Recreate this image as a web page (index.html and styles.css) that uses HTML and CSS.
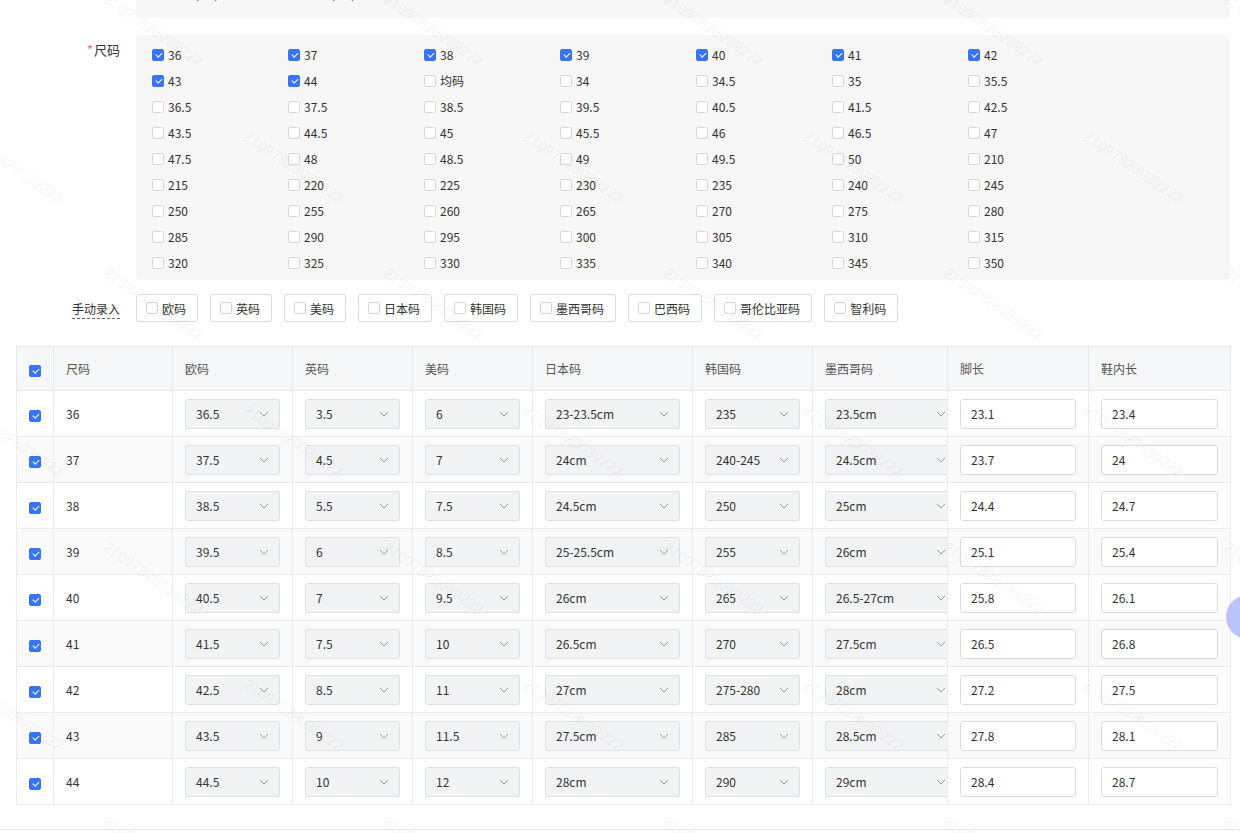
FILE: index.html
```html
<!DOCTYPE html>
<html lang="zh-CN">
<head>
<meta charset="utf-8">
<title>尺码</title>
<link rel="stylesheet" href="styles.css">
</head>
<body>
<div class="page">
  <div class="top-box">
    <div class="top-items">
      <span class="opt"><i class="cb"></i>欧码 (EU)</span>
      <span class="opt"><i class="cb on"></i>英码 (UK)</span>
    </div>
  </div>

  <div class="size-row">
    <div class="label"><span class="req">*</span>尺码</div>
    <div class="size-box">
      <span class="opt"><i class="cb on"></i>36</span>
      <span class="opt"><i class="cb on"></i>37</span>
      <span class="opt"><i class="cb on"></i>38</span>
      <span class="opt"><i class="cb on"></i>39</span>
      <span class="opt"><i class="cb on"></i>40</span>
      <span class="opt"><i class="cb on"></i>41</span>
      <span class="opt"><i class="cb on"></i>42</span>
      <span class="opt"><i class="cb on"></i>43</span>
      <span class="opt"><i class="cb on"></i>44</span>
      <span class="opt"><i class="cb"></i>均码</span>
      <span class="opt"><i class="cb"></i>34</span>
      <span class="opt"><i class="cb"></i>34.5</span>
      <span class="opt"><i class="cb"></i>35</span>
      <span class="opt"><i class="cb"></i>35.5</span>
      <span class="opt"><i class="cb"></i>36.5</span>
      <span class="opt"><i class="cb"></i>37.5</span>
      <span class="opt"><i class="cb"></i>38.5</span>
      <span class="opt"><i class="cb"></i>39.5</span>
      <span class="opt"><i class="cb"></i>40.5</span>
      <span class="opt"><i class="cb"></i>41.5</span>
      <span class="opt"><i class="cb"></i>42.5</span>
      <span class="opt"><i class="cb"></i>43.5</span>
      <span class="opt"><i class="cb"></i>44.5</span>
      <span class="opt"><i class="cb"></i>45</span>
      <span class="opt"><i class="cb"></i>45.5</span>
      <span class="opt"><i class="cb"></i>46</span>
      <span class="opt"><i class="cb"></i>46.5</span>
      <span class="opt"><i class="cb"></i>47</span>
      <span class="opt"><i class="cb"></i>47.5</span>
      <span class="opt"><i class="cb"></i>48</span>
      <span class="opt"><i class="cb"></i>48.5</span>
      <span class="opt"><i class="cb"></i>49</span>
      <span class="opt"><i class="cb"></i>49.5</span>
      <span class="opt"><i class="cb"></i>50</span>
      <span class="opt"><i class="cb"></i>210</span>
      <span class="opt"><i class="cb"></i>215</span>
      <span class="opt"><i class="cb"></i>220</span>
      <span class="opt"><i class="cb"></i>225</span>
      <span class="opt"><i class="cb"></i>230</span>
      <span class="opt"><i class="cb"></i>235</span>
      <span class="opt"><i class="cb"></i>240</span>
      <span class="opt"><i class="cb"></i>245</span>
      <span class="opt"><i class="cb"></i>250</span>
      <span class="opt"><i class="cb"></i>255</span>
      <span class="opt"><i class="cb"></i>260</span>
      <span class="opt"><i class="cb"></i>265</span>
      <span class="opt"><i class="cb"></i>270</span>
      <span class="opt"><i class="cb"></i>275</span>
      <span class="opt"><i class="cb"></i>280</span>
      <span class="opt"><i class="cb"></i>285</span>
      <span class="opt"><i class="cb"></i>290</span>
      <span class="opt"><i class="cb"></i>295</span>
      <span class="opt"><i class="cb"></i>300</span>
      <span class="opt"><i class="cb"></i>305</span>
      <span class="opt"><i class="cb"></i>310</span>
      <span class="opt"><i class="cb"></i>315</span>
      <span class="opt"><i class="cb"></i>320</span>
      <span class="opt"><i class="cb"></i>325</span>
      <span class="opt"><i class="cb"></i>330</span>
      <span class="opt"><i class="cb"></i>335</span>
      <span class="opt"><i class="cb"></i>340</span>
      <span class="opt"><i class="cb"></i>345</span>
      <span class="opt"><i class="cb"></i>350</span>
    </div>
  </div>

  <div class="manual-row">
    <div class="label"><span class="dashed">手动录入</span></div>
    <div class="btns">
      <span class="btn"><i class="cb"></i>欧码</span>
      <span class="btn"><i class="cb"></i>英码</span>
      <span class="btn"><i class="cb"></i>美码</span>
      <span class="btn"><i class="cb"></i>日本码</span>
      <span class="btn"><i class="cb"></i>韩国码</span>
      <span class="btn"><i class="cb"></i>墨西哥码</span>
      <span class="btn"><i class="cb"></i>巴西码</span>
      <span class="btn"><i class="cb"></i>哥伦比亚码</span>
      <span class="btn"><i class="cb"></i>智利码</span>
    </div>
  </div>

  <table class="grid">
    <colgroup>
      <col class="c-check"><col class="c-size"><col class="c-120"><col class="c-120"><col class="c-120"><col class="c-160"><col class="c-120"><col class="c-135"><col class="c-141"><col class="c-142">
    </colgroup>
    <thead>
      <tr>
        <th class="td-check"><i class="cb on"></i></th>
        <th>尺码</th><th>欧码</th><th>英码</th><th>美码</th><th>日本码</th><th>韩国码</th><th>墨西哥码</th><th>脚长</th><th>鞋内长</th>
      </tr>
    </thead>
    <tbody>
      <tr>
        <td class="td-check"><i class="cb on"></i></td><td>36</td>
        <td><span class="sel w95">36.5<svg viewBox="0 0 10 6"><path d="M1 1l4 4 4-4"/></svg></span></td>
        <td><span class="sel w95">3.5<svg viewBox="0 0 10 6"><path d="M1 1l4 4 4-4"/></svg></span></td>
        <td><span class="sel w95">6<svg viewBox="0 0 10 6"><path d="M1 1l4 4 4-4"/></svg></span></td>
        <td><span class="sel w135">23-23.5cm<svg viewBox="0 0 10 6"><path d="M1 1l4 4 4-4"/></svg></span></td>
        <td><span class="sel w95">235<svg viewBox="0 0 10 6"><path d="M1 1l4 4 4-4"/></svg></span></td>
        <td class="clip"><span class="sel w132">23.5cm<svg viewBox="0 0 10 6"><path d="M1 1l4 4 4-4"/></svg></span></td>
        <td><span class="inp w116">23.1</span></td>
        <td><span class="inp w117">23.4</span></td>
      </tr>
      <tr>
        <td class="td-check"><i class="cb on"></i></td><td>37</td>
        <td><span class="sel w95">37.5<svg viewBox="0 0 10 6"><path d="M1 1l4 4 4-4"/></svg></span></td>
        <td><span class="sel w95">4.5<svg viewBox="0 0 10 6"><path d="M1 1l4 4 4-4"/></svg></span></td>
        <td><span class="sel w95">7<svg viewBox="0 0 10 6"><path d="M1 1l4 4 4-4"/></svg></span></td>
        <td><span class="sel w135">24cm<svg viewBox="0 0 10 6"><path d="M1 1l4 4 4-4"/></svg></span></td>
        <td><span class="sel w95">240-245<svg viewBox="0 0 10 6"><path d="M1 1l4 4 4-4"/></svg></span></td>
        <td class="clip"><span class="sel w132">24.5cm<svg viewBox="0 0 10 6"><path d="M1 1l4 4 4-4"/></svg></span></td>
        <td><span class="inp w116">23.7</span></td>
        <td><span class="inp w117">24</span></td>
      </tr>
      <tr>
        <td class="td-check"><i class="cb on"></i></td><td>38</td>
        <td><span class="sel w95">38.5<svg viewBox="0 0 10 6"><path d="M1 1l4 4 4-4"/></svg></span></td>
        <td><span class="sel w95">5.5<svg viewBox="0 0 10 6"><path d="M1 1l4 4 4-4"/></svg></span></td>
        <td><span class="sel w95">7.5<svg viewBox="0 0 10 6"><path d="M1 1l4 4 4-4"/></svg></span></td>
        <td><span class="sel w135">24.5cm<svg viewBox="0 0 10 6"><path d="M1 1l4 4 4-4"/></svg></span></td>
        <td><span class="sel w95">250<svg viewBox="0 0 10 6"><path d="M1 1l4 4 4-4"/></svg></span></td>
        <td class="clip"><span class="sel w132">25cm<svg viewBox="0 0 10 6"><path d="M1 1l4 4 4-4"/></svg></span></td>
        <td><span class="inp w116">24.4</span></td>
        <td><span class="inp w117">24.7</span></td>
      </tr>
      <tr>
        <td class="td-check"><i class="cb on"></i></td><td>39</td>
        <td><span class="sel w95">39.5<svg viewBox="0 0 10 6"><path d="M1 1l4 4 4-4"/></svg></span></td>
        <td><span class="sel w95">6<svg viewBox="0 0 10 6"><path d="M1 1l4 4 4-4"/></svg></span></td>
        <td><span class="sel w95">8.5<svg viewBox="0 0 10 6"><path d="M1 1l4 4 4-4"/></svg></span></td>
        <td><span class="sel w135">25-25.5cm<svg viewBox="0 0 10 6"><path d="M1 1l4 4 4-4"/></svg></span></td>
        <td><span class="sel w95">255<svg viewBox="0 0 10 6"><path d="M1 1l4 4 4-4"/></svg></span></td>
        <td class="clip"><span class="sel w132">26cm<svg viewBox="0 0 10 6"><path d="M1 1l4 4 4-4"/></svg></span></td>
        <td><span class="inp w116">25.1</span></td>
        <td><span class="inp w117">25.4</span></td>
      </tr>
      <tr>
        <td class="td-check"><i class="cb on"></i></td><td>40</td>
        <td><span class="sel w95">40.5<svg viewBox="0 0 10 6"><path d="M1 1l4 4 4-4"/></svg></span></td>
        <td><span class="sel w95">7<svg viewBox="0 0 10 6"><path d="M1 1l4 4 4-4"/></svg></span></td>
        <td><span class="sel w95">9.5<svg viewBox="0 0 10 6"><path d="M1 1l4 4 4-4"/></svg></span></td>
        <td><span class="sel w135">26cm<svg viewBox="0 0 10 6"><path d="M1 1l4 4 4-4"/></svg></span></td>
        <td><span class="sel w95">265<svg viewBox="0 0 10 6"><path d="M1 1l4 4 4-4"/></svg></span></td>
        <td class="clip"><span class="sel w132">26.5-27cm<svg viewBox="0 0 10 6"><path d="M1 1l4 4 4-4"/></svg></span></td>
        <td><span class="inp w116">25.8</span></td>
        <td><span class="inp w117">26.1</span></td>
      </tr>
      <tr>
        <td class="td-check"><i class="cb on"></i></td><td>41</td>
        <td><span class="sel w95">41.5<svg viewBox="0 0 10 6"><path d="M1 1l4 4 4-4"/></svg></span></td>
        <td><span class="sel w95">7.5<svg viewBox="0 0 10 6"><path d="M1 1l4 4 4-4"/></svg></span></td>
        <td><span class="sel w95">10<svg viewBox="0 0 10 6"><path d="M1 1l4 4 4-4"/></svg></span></td>
        <td><span class="sel w135">26.5cm<svg viewBox="0 0 10 6"><path d="M1 1l4 4 4-4"/></svg></span></td>
        <td><span class="sel w95">270<svg viewBox="0 0 10 6"><path d="M1 1l4 4 4-4"/></svg></span></td>
        <td class="clip"><span class="sel w132">27.5cm<svg viewBox="0 0 10 6"><path d="M1 1l4 4 4-4"/></svg></span></td>
        <td><span class="inp w116">26.5</span></td>
        <td><span class="inp w117">26.8</span></td>
      </tr>
      <tr>
        <td class="td-check"><i class="cb on"></i></td><td>42</td>
        <td><span class="sel w95">42.5<svg viewBox="0 0 10 6"><path d="M1 1l4 4 4-4"/></svg></span></td>
        <td><span class="sel w95">8.5<svg viewBox="0 0 10 6"><path d="M1 1l4 4 4-4"/></svg></span></td>
        <td><span class="sel w95">11<svg viewBox="0 0 10 6"><path d="M1 1l4 4 4-4"/></svg></span></td>
        <td><span class="sel w135">27cm<svg viewBox="0 0 10 6"><path d="M1 1l4 4 4-4"/></svg></span></td>
        <td><span class="sel w95">275-280<svg viewBox="0 0 10 6"><path d="M1 1l4 4 4-4"/></svg></span></td>
        <td class="clip"><span class="sel w132">28cm<svg viewBox="0 0 10 6"><path d="M1 1l4 4 4-4"/></svg></span></td>
        <td><span class="inp w116">27.2</span></td>
        <td><span class="inp w117">27.5</span></td>
      </tr>
      <tr>
        <td class="td-check"><i class="cb on"></i></td><td>43</td>
        <td><span class="sel w95">43.5<svg viewBox="0 0 10 6"><path d="M1 1l4 4 4-4"/></svg></span></td>
        <td><span class="sel w95">9<svg viewBox="0 0 10 6"><path d="M1 1l4 4 4-4"/></svg></span></td>
        <td><span class="sel w95">11.5<svg viewBox="0 0 10 6"><path d="M1 1l4 4 4-4"/></svg></span></td>
        <td><span class="sel w135">27.5cm<svg viewBox="0 0 10 6"><path d="M1 1l4 4 4-4"/></svg></span></td>
        <td><span class="sel w95">285<svg viewBox="0 0 10 6"><path d="M1 1l4 4 4-4"/></svg></span></td>
        <td class="clip"><span class="sel w132">28.5cm<svg viewBox="0 0 10 6"><path d="M1 1l4 4 4-4"/></svg></span></td>
        <td><span class="inp w116">27.8</span></td>
        <td><span class="inp w117">28.1</span></td>
      </tr>
      <tr>
        <td class="td-check"><i class="cb on"></i></td><td>44</td>
        <td><span class="sel w95">44.5<svg viewBox="0 0 10 6"><path d="M1 1l4 4 4-4"/></svg></span></td>
        <td><span class="sel w95">10<svg viewBox="0 0 10 6"><path d="M1 1l4 4 4-4"/></svg></span></td>
        <td><span class="sel w95">12<svg viewBox="0 0 10 6"><path d="M1 1l4 4 4-4"/></svg></span></td>
        <td><span class="sel w135">28cm<svg viewBox="0 0 10 6"><path d="M1 1l4 4 4-4"/></svg></span></td>
        <td><span class="sel w95">290<svg viewBox="0 0 10 6"><path d="M1 1l4 4 4-4"/></svg></span></td>
        <td class="clip"><span class="sel w132">29cm<svg viewBox="0 0 10 6"><path d="M1 1l4 4 4-4"/></svg></span></td>
        <td><span class="inp w116">28.4</span></td>
        <td><span class="inp w117">28.7</span></td>
      </tr>
    </tbody>
  </table>

  <div class="footer-line"></div>
</div>

<div class="float-ball"></div>

<div class="watermark">
  <div class="wm-row even"><span>21097828039222</span><span>21097828039222</span><span>21097828039222</span><span>21097828039222</span><span>21097828039222</span></div>
  <div class="wm-row odd"><span>21097828039222</span><span>21097828039222</span><span>21097828039222</span><span>21097828039222</span><span>21097828039222</span></div>
  <div class="wm-row even"><span>21097828039222</span><span>21097828039222</span><span>21097828039222</span><span>21097828039222</span><span>21097828039222</span></div>
  <div class="wm-row odd"><span>21097828039222</span><span>21097828039222</span><span>21097828039222</span><span>21097828039222</span><span>21097828039222</span></div>
  <div class="wm-row even"><span>21097828039222</span><span>21097828039222</span><span>21097828039222</span><span>21097828039222</span><span>21097828039222</span></div>
  <div class="wm-row odd"><span>21097828039222</span><span>21097828039222</span><span>21097828039222</span><span>21097828039222</span><span>21097828039222</span></div>
  <div class="wm-row even"><span>21097828039222</span><span>21097828039222</span><span>21097828039222</span><span>21097828039222</span><span>21097828039222</span></div>
</div>
</body>
</html>
```
FILE: styles.css
```css
html, body {
  margin: 0;
  padding: 0;
  background: #fff;
}
body {
  font-family: "Noto Sans CJK SC", "Noto Sans", sans-serif;
  font-size: 12px;
  color: #333;
  width: 1240px;
  height: 833px;
  overflow: hidden;
  position: relative;
}
.page {
  display: flex;
  flex-direction: column;
}

/* checkbox */
.cb {
  display: inline-block;
  width: 12px;
  height: 12px;
  box-sizing: border-box;
  border: 1px solid #d4d7dd;
  border-radius: 2px;
  background: #fff;
  position: relative;
  flex: none;
}
.cb.on {
  background: #3874f6;
  border-color: #3874f6;
}
.cb.on::after {
  content: "";
  position: absolute;
  left: 3.5px;
  top: 1.2px;
  width: 2.5px;
  height: 5px;
  border: solid #fff;
  border-width: 0 1.3px 1.3px 0;
  transform: rotate(45deg);
}

/* top box (cut off) */
.top-box {
  margin-left: 136px;
  margin-right: 10px;
  height: 18px;
  background: #f7f7f7;
  border-radius: 0 0 4px 4px;
  overflow: hidden;
}
.top-items {
  display: flex;
  padding-left: 16px;
  margin-top: -19px;
}
.top-items .opt {
  width: 136px;
}

.opt {
  display: flex;
  align-items: center;
  gap: 4px;
  height: 26px;
  line-height: 26px;
}

/* size section */
.size-row {
  display: flex;
  margin-top: 17px;
}
.label {
  width: 136px;
  box-sizing: border-box;
  padding-right: 16px;
  text-align: right;
  flex: none;
  font-size: 12px;
  color: #333;
}
.size-row .label {
  padding-top: 5px;
  font-size: 13px;
}
.req {
  color: #f56c6c;
  margin-right: 1px;
}
.size-box {
  flex: 1;
  margin-right: 10px;
  background: #f7f7f7;
  border-radius: 4px;
  padding: 7px 0 4px 16px;
  display: grid;
  grid-template-columns: repeat(7, 136px);
  grid-auto-rows: 26px;
}

/* manual entry */
.manual-row {
  display: flex;
  align-items: center;
  margin-top: 14px;
  height: 28px;
}
.dashed {
  border-bottom: 1px dashed #666;
  padding-bottom: 1px;
}
.btns {
  display: flex;
  gap: 12px;
}
.btn {
  display: flex;
  align-items: center;
  gap: 4px;
  height: 28px;
  box-sizing: border-box;
  padding: 0 11px 0 9px;
  border: 1px solid #dcdcdc;
  border-radius: 3px;
  background: #fff;
  white-space: nowrap;
}

/* table */
.grid {
  margin: 24px 0 0 16px;
  width: 1214px;
  table-layout: fixed;
  border-collapse: collapse;
  border: 1px solid #e9e9e9;
}
.c-check { width: 37px; }
.c-size { width: 119px; }
.c-120 { width: 120px; }
.c-160 { width: 160px; }
.c-135 { width: 135px; }
.c-141 { width: 141px; }
.c-142 { width: 142px; }
.grid th {
  height: 43px;
  background: #f6f7f8;
  font-weight: normal;
  color: #555;
  text-align: left;
  padding: 0 12px;
  border: 1px solid #e9e9e9;
}
.grid td {
  height: 45px;
  padding: 0 12px 0 12px;
  border: 1px solid #ececec;
  white-space: nowrap;
  background: #fff;
}
.grid tbody tr:nth-child(even) td {
  background: #fafafa;
}
.grid th.td-check, .grid td.td-check {
  padding: 0;
  text-align: center;
}
.grid .td-check .cb {
  vertical-align: middle;
}
.grid td.clip {
  overflow: hidden;
  padding-right: 0;
}
.sel, .inp {
  display: flex;
  align-items: center;
  height: 30px;
  box-sizing: border-box;
  border-radius: 3px;
  padding: 0 10px;
  color: #333;
}
.sel {
  background: #f2f3f5;
  border: 1px solid #dcdfe4;
  justify-content: space-between;
}
.inp {
  background: #fff;
  border: 1px solid #d9dbe0;
}
.sel svg {
  width: 10px;
  height: 6px;
  fill: none;
  stroke: #999;
  stroke-width: 1;
}
.w95 { width: 95px; }
.w132 { width: 132px; }
.w135 { width: 135px; }
.w116 { width: 116px; }
.w117 { width: 117px; }

.footer-line {
  margin-top: 24px;
  height: 1px;
  background: #e8e8e8;
}

/* floating ball at right edge */
.float-ball {
  position: absolute;
  left: 1226px;
  top: 595px;
  width: 44px;
  height: 44px;
  border-radius: 50%;
  background: #bac4fa;
}

/* watermark overlay */
.watermark {
  position: absolute;
  left: 0;
  top: -10px;
  width: 1240px;
  height: 850px;
  overflow: hidden;
  pointer-events: none;
}
.wm-row {
  display: flex;
  height: 137px;
}
.wm-row.even { margin-left: 110px; }
.wm-row.odd { margin-left: -30px; }
.wm-row span {
  flex: none;
  width: 280px;
  font-family: "Liberation Sans", sans-serif;
  font-size: 15px;
  color: rgba(0, 0, 0, 0.06);
  transform: rotate(34deg);
  transform-origin: 0 0;
  white-space: nowrap;
  height: 20px;
}
```
